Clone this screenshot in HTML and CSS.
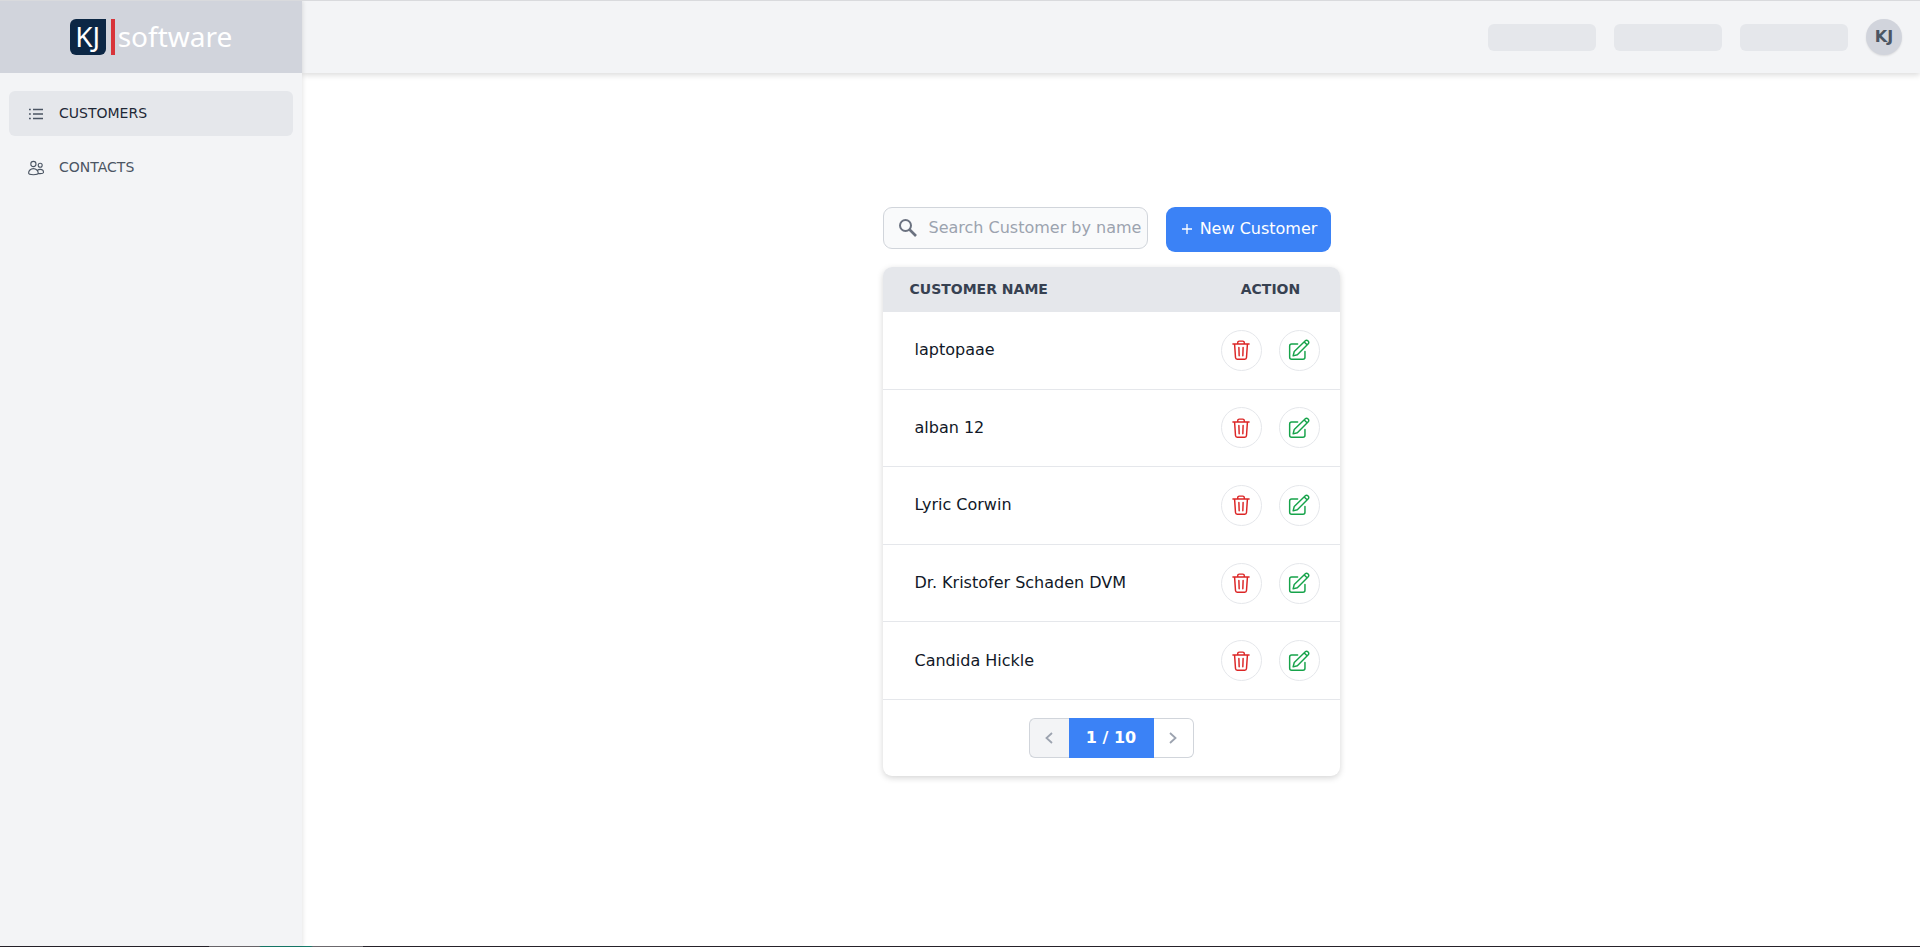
FILE: index.html
```html
<!DOCTYPE html>
<html lang="en">
<head>
<meta charset="utf-8">
<meta name="viewport" content="width=device-width, initial-scale=1">
<title>KJ Software - Customers</title>
<link rel="stylesheet" href="styles.css">
</head>
<body>
<svg class="sprite" aria-hidden="true">
  <symbol id="trash" viewBox="0 0 24 24" fill="none" stroke="currentColor" stroke-width="1.6" stroke-linecap="round" stroke-linejoin="round">
    <path d="M3.2 5.4h17.6M5 5.6l1 14.6c.1 1 .8 1.8 1.800 1.800h8.400c1 0 1.700-.8 1.800-1.800l1-14.600M8.400 5.200V4c0-1 .7-1.700 1.700-1.700h3.800c1 0 1.700.7 1.700 1.700v1.200M9.700 9.300l.3 9M14.300 9.300l-.3 9"/>
  </symbol>
  <symbol id="edit" viewBox="0 0 24 24" fill="none" stroke="currentColor" stroke-width="1.6" stroke-linecap="round" stroke-linejoin="round">
    <path d="M10.500 5.500H4A2.200 2.200 0 0 0 1.800 7.700V20A2.200 2.200 0 0 0 4 22.200h12.300a2.200 2.200 0 0 0 2.200-2.200v-6.500"/>
    <path d="M5.600 18.400l1.200-4.800L18.900 1.900a1.900 1.900 0 0 1 2.700 0l.5.5a1.900 1.900 0 0 1 0 2.700L10.200 17.100zM17.700 3.200l3.100 3.100"/>
  </symbol>
</svg>
<div class="app">
  <aside class="sidebar">
    <a class="logo" href="#" aria-label="KJ software">
      <span class="logo-mark">KJ</span>
      <span class="logo-bar"></span>
      <span class="logo-word">software</span>
    </a>
    <nav class="menu">
      <a class="menu-item active" href="#">
        <svg class="menu-icon" viewBox="0 0 16 16" fill="none" stroke="currentColor" stroke-width="1.300"><path d="M5 3.500h10M5 8h10M5 12.500h10"/><path d="M1 3.500h1.800M1 8h1.800M1 12.500h1.800" stroke-width="1.700"/></svg>
        <span class="menu-label">CUSTOMERS</span>
      </a>
      <a class="menu-item" href="#">
        <svg class="menu-icon" viewBox="0 0 16 16" fill="none" stroke="currentColor" stroke-width="1.100" stroke-linejoin="round"><circle cx="5.400" cy="4" r="2.600"/><circle cx="12.200" cy="5.300" r="2"/><path d="M5.400 8.600c-2.800 0-4.800 2.200-4.800 4.500 0 1 2 1.700 4.800 1.700s4.800-.7 4.800-1.700c0-2.300-2-4.500-4.800-4.500zM9.500 10.400c.7-.7 1.600-1 2.700-1 2 0 3.300 1.500 3.300 3 0 .8-1.400 1.200-3.300 1.200-.8 0-1.500 0-2-.2"/></svg>
        <span class="menu-label">CONTACTS</span>
      </a>
    </nav>
  </aside>
  <div class="page">
    <header class="topbar">
      <span class="placeholder"></span>
      <span class="placeholder"></span>
      <span class="placeholder"></span>
      <button class="avatar" type="button">KJ</button>
    </header>
    <main class="content">
      <div class="customers">
        <div class="toolbar">
          <label class="search">
            <svg class="search-icon" viewBox="0 0 18 18" fill="none" stroke="currentColor" stroke-width="2"><circle cx="6.500" cy="6.500" r="5.500"/><path d="M10.500 10.500l6.500 6.500" stroke-width="2.600"/></svg>
            <input type="text" placeholder="Search Customer by name" aria-label="Search Customer by name">
          </label>
          <button class="new-customer" type="button"><svg class="plus" viewBox="0 0 12 12" fill="none" stroke="currentColor" stroke-width="1.300"><path d="M6 1v10M1 6h10"/></svg>New Customer</button>
        </div>
        <section class="card">
          <table class="table">
            <thead>
              <tr><th class="name">CUSTOMER NAME</th><th class="action">ACTION</th></tr>
            </thead>
            <tbody>
              <tr><td>laptopaae</td><td><div class="actions"><button class="round delete" type="button" aria-label="Delete"><svg><use href="#trash"/></svg></button><button class="round edit" type="button" aria-label="Edit"><svg><use href="#edit"/></svg></button></div></td></tr>
              <tr><td>alban 12</td><td><div class="actions"><button class="round delete" type="button" aria-label="Delete"><svg><use href="#trash"/></svg></button><button class="round edit" type="button" aria-label="Edit"><svg><use href="#edit"/></svg></button></div></td></tr>
              <tr><td>Lyric Corwin</td><td><div class="actions"><button class="round delete" type="button" aria-label="Delete"><svg><use href="#trash"/></svg></button><button class="round edit" type="button" aria-label="Edit"><svg><use href="#edit"/></svg></button></div></td></tr>
              <tr><td>Dr. Kristofer Schaden DVM</td><td><div class="actions"><button class="round delete" type="button" aria-label="Delete"><svg><use href="#trash"/></svg></button><button class="round edit" type="button" aria-label="Edit"><svg><use href="#edit"/></svg></button></div></td></tr>
              <tr><td>Candida Hickle</td><td><div class="actions"><button class="round delete" type="button" aria-label="Delete"><svg><use href="#trash"/></svg></button><button class="round edit" type="button" aria-label="Edit"><svg><use href="#edit"/></svg></button></div></td></tr>
            </tbody>
          </table>
          <div class="pagination">
            <button class="step prev" type="button" aria-label="Previous page" disabled><svg viewBox="0 0 12 12" fill="none" stroke="currentColor" stroke-width="1.800"><path d="M9 1L3.500 6 9 11"/></svg></button>
            <span class="current">1 / 10</span>
            <button class="step next" type="button" aria-label="Next page"><svg viewBox="0 0 12 12" fill="none" stroke="currentColor" stroke-width="1.800"><path d="M3 1l5.500 5L3 11"/></svg></button>
          </div>
        </section>
      </div>
    </main>
  </div>
</div>
<footer class="strip"></footer>
</body>
</html>
```

FILE: styles.css
```css
* {
  box-sizing: border-box;
}

body {
  margin: 0;
  min-height: 100vh;
  display: flex;
  flex-direction: column;
  border-top: 1px solid #d9dadd;
  background: #fff;
  color: #111827;
  font-family: "DejaVu Sans", sans-serif;
  font-size: 16px;
  line-height: 24px;
}

button,
input {
  font: inherit;
  color: inherit;
  margin: 0;
}

button {
  padding: 0;
  border: 0;
  cursor: pointer;
}

.sprite {
  position: absolute;
  width: 0;
  height: 0;
}

.app {
  flex: 1;
  display: flex;
}

.sidebar {
  position: relative;
  z-index: 1;
  width: 302px;
  flex: none;
  background: #f3f4f6;
  box-shadow: 1px 0 4px rgba(0, 0, 0, 0.1);
}

.logo {
  height: 72px;
  display: flex;
  align-items: center;
  justify-content: center;
  background: #d1d4dc;
  color: #fff;
  font-family: "Noto Sans", "Open Sans", sans-serif;
  font-size: 28px;
  line-height: 34px;
  text-decoration: none;
}

.logo-mark {
  width: 36px;
  height: 36px;
  border-radius: 6px 0 6px 6px;
  background: #0c2745;
  text-align: center;
}

.logo-bar {
  width: 4px;
  height: 36px;
  margin: 0 3px 0 5px;
  background: #d8343a;
}

.logo-word {
  padding-bottom: 2px;
}

.menu {
  display: flex;
  flex-direction: column;
  gap: 9px;
  padding: 18px 9px;
}

.menu-item {
  height: 45px;
  display: flex;
  align-items: center;
  gap: 15px;
  padding: 0 19px;
  border-radius: 6px;
  color: #4b5563;
  font-size: 14px;
  text-decoration: none;
}

.menu-item.active {
  background: #e5e7eb;
  color: #1f2937;
}

.menu-label {
  padding-bottom: 2px;
}

.menu-icon {
  width: 16px;
  height: 16px;
  color: #4b5563;
}

.page {
  flex: 1;
  display: flex;
  flex-direction: column;
}

.topbar {
  height: 72px;
  display: flex;
  align-items: center;
  justify-content: flex-end;
  gap: 18px;
  padding: 0 18px;
  background: #f3f4f6;
  box-shadow: 0 2px 6px rgba(0, 0, 0, 0.15);
}

.placeholder {
  width: 108px;
  height: 27px;
  border-radius: 6px;
  background: #e5e7eb;
}

.avatar {
  width: 36px;
  height: 36px;
  border-radius: 50%;
  background: #d1d4dc;
  color: #4b5563;
  font-weight: bold;
  box-shadow: 0 1px 2px rgba(0, 0, 0, 0.1);
}

.content {
  flex: 1;
  display: flex;
  justify-content: center;
  padding: 134px 18px 18px;
}

.customers {
  width: 457px;
}

.toolbar {
  display: flex;
  align-items: flex-start;
  gap: 18px;
  padding-right: 9px;
  margin-bottom: 15px;
}

.search {
  flex: 1;
  min-width: 0;
  height: 42px;
  display: flex;
  align-items: center;
  gap: 12px;
  padding-left: 15px;
  border: 1px solid #d1d5db;
  border-radius: 9px;
  background: #f9fafb;
}

.search-icon {
  width: 18px;
  height: 18px;
  flex: none;
  color: #6b7280;
}

.search input {
  flex: 1;
  min-width: 0;
  padding: 0;
  border: 0;
  outline: 0;
  background: transparent;
}

.search input::placeholder {
  color: #9ca3af;
  opacity: 1;
}

.new-customer {
  width: 165px;
  height: 45px;
  display: flex;
  align-items: center;
  justify-content: center;
  gap: 7px;
  padding: 0 0 2px 2px;
  border-radius: 9px;
  background: #3b82f6;
  color: #fff;
  white-space: nowrap;
}

.plus {
  width: 12px;
  height: 12px;
}

.card {
  border-radius: 9px;
  background: #fff;
  box-shadow: 0 2px 6px rgba(0, 0, 0, 0.17);
  overflow: hidden;
}

.table {
  width: 100%;
  height: 433px;
  border-collapse: separate;
  border-spacing: 0;
}

th {
  height: 45px;
  padding: 0 0 2px;
  background: #e5e7eb;
  color: #374151;
  font-size: 14px;
}

.name {
  padding-left: 27px;
  text-align: left;
}

.action {
  width: 138px;
}

td {
  padding: 0;
  border-bottom: 1px solid #e5e7eb;
}

td:first-child {
  padding-left: 32px;
}

.actions {
  display: flex;
  justify-content: flex-end;
  gap: 17px;
  padding-right: 20px;
}

.round {
  width: 41px;
  height: 41px;
  display: grid;
  place-items: center;
  border: 1px solid #e5e7eb;
  border-radius: 50%;
  background: #fff;
}

.round svg {
  width: 22px;
  height: 22px;
}

.delete {
  color: #dc2626;
}

.edit {
  color: #16a34a;
}

.pagination {
  display: flex;
  justify-content: center;
  padding: 18px;
}

.step {
  width: 40px;
  height: 40px;
  display: grid;
  place-items: center;
  border: 1px solid #d1d5db;
  background: #fff;
  color: #9ca3af;
}

.step svg {
  width: 12px;
  height: 12px;
}

.prev {
  border-right: 0;
  border-radius: 6px 0 0 6px;
  background: #f3f4f6;
}

.next {
  border-left: 0;
  border-radius: 0 6px 6px 0;
}

.current {
  width: 85px;
  height: 40px;
  background: #3b82f6;
  color: #fff;
  font-weight: bold;
  line-height: 40px;
  text-align: center;
}

.strip {
  height: 1px;
  background: linear-gradient(to right, #26222a 209px, #6b686d 209px 259px, #16796a 261px 311px, #6b686d 313px 363px, #26222a 363px);
}
```
